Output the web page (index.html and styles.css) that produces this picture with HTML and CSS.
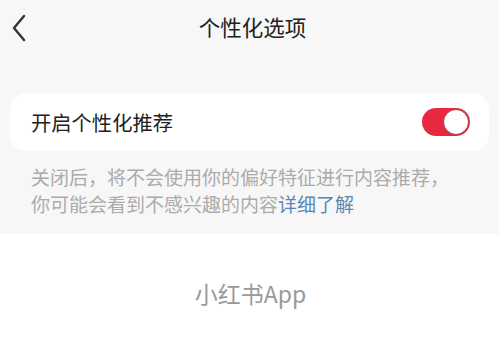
FILE: index.html
```html
<!DOCTYPE html>
<html lang="zh-CN">
<head>
    <meta charset="UTF-8">
    <meta name="viewport" content="width=device-width, initial-scale=1.0">
    <title>个性化选项</title>
    <link rel="stylesheet" href="styles.css">
</head>
<body>
    <div class="settings">
        <div class="header">
            <span class="back">
                <svg width="16" height="28" viewBox="0 0 16 28">
                    <path d="M13 2 L3 14 L13 26" fill="none" stroke="#333" stroke-width="2.4" stroke-linecap="round" stroke-linejoin="round"/>
                </svg>
            </span>
            <div class="title">个性化选项</div>
        </div>

        <div class="card">
            <span class="label">开启个性化推荐</span>
            <span class="toggle on"><span class="knob"></span></span>
        </div>

        <p class="desc">关闭后，将不会使用你的偏好特征进行内容推荐，<br>你可能会看到不感兴趣的内容<a class="link">详细了解</a></p>
    </div>

    <div class="footer">小红书App</div>
</body>
</html>
```

FILE: styles.css
```css
body {
    margin: 0;
    padding: 0;
    width: 499px;
    height: 343px;
    overflow: hidden;
    background-color: #fff;
    font-family: "Noto Sans CJK SC", "Noto Sans", sans-serif;
}

.settings {
    background-color: #f7f7f7;
    height: 234px;
    padding: 0 10px;
    box-sizing: border-box;
}

.header {
    height: 53px;
    display: flex;
    align-items: center;
    justify-content: center;
    position: relative;
}

.back {
    position: absolute;
    left: 1px;
    top: 14px;
    display: flex;
}

.title {
    font-size: 21.5px;
    color: #222;
    margin-left: 6px;
}

.card {
    margin-top: 40px;
    height: 58px;
    background-color: #fff;
    border-radius: 16px;
    display: flex;
    align-items: center;
    justify-content: space-between;
    padding: 0 19px 0 21px;
}

.label {
    font-size: 20.3px;
    color: #222;
}

.toggle {
    width: 48px;
    height: 28px;
    border-radius: 14px;
    background-color: #e8283f;
    position: relative;
    box-sizing: border-box;
}

.knob {
    position: absolute;
    right: 1px;
    top: 1px;
    width: 26px;
    height: 26px;
    border-radius: 50%;
    background-color: #fff;
    border: 1.5px solid #a8394a;
    box-sizing: border-box;
}

.desc {
    margin: 12px 0 0 21px;
    font-size: 19px;
    line-height: 27px;
    color: #ababab;
}

.link {
    color: #5b86b3;
}

.footer {
    text-align: center;
    font-size: 23px;
    line-height: 32px;
    color: #9a9a9a;
    padding-top: 43px;
    padding-left: 2px;
}
```
